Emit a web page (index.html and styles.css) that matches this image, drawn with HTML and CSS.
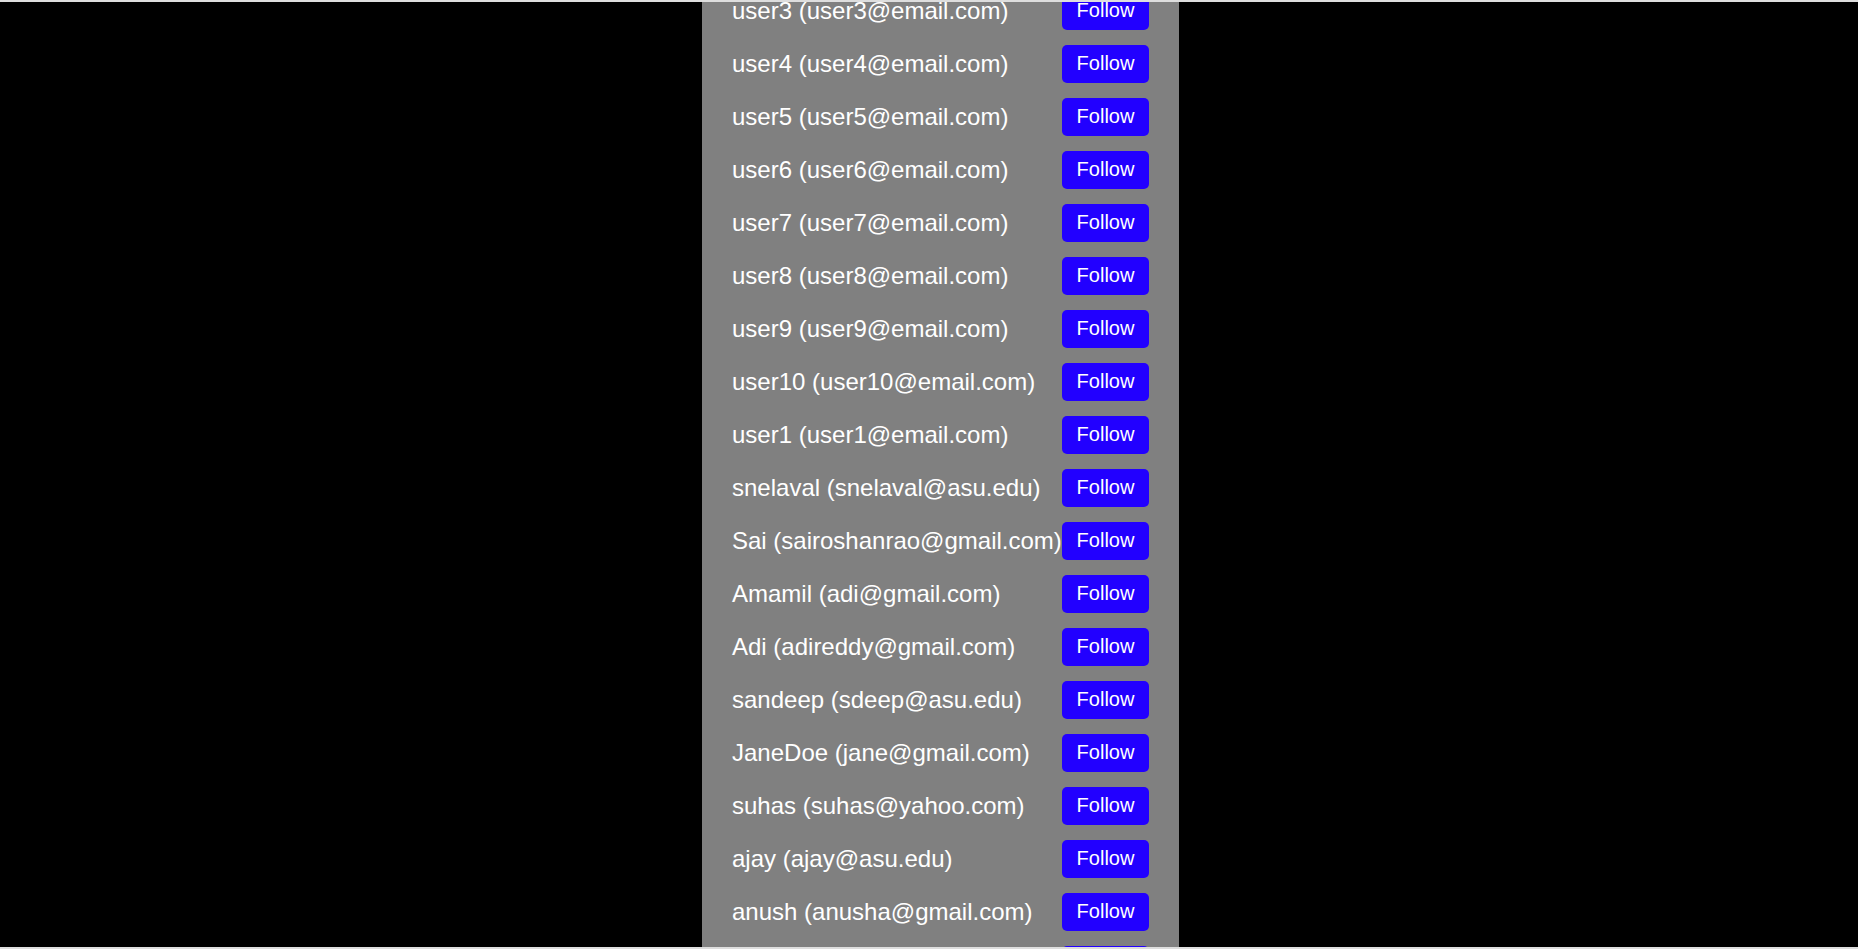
FILE: index.html
```html
<!DOCTYPE html>
<html lang="en">
<head>
<meta charset="utf-8">
<title>Users</title>
<link rel="stylesheet" href="styles.css">
</head>
<body>
<div class="frame">
  <div class="panel">
    <ul class="user-list">
      <li class="user-row"><span class="user-name">user3 (user3@email.com)</span><button class="follow-btn">Follow</button></li>
      <li class="user-row"><span class="user-name">user4 (user4@email.com)</span><button class="follow-btn">Follow</button></li>
      <li class="user-row"><span class="user-name">user5 (user5@email.com)</span><button class="follow-btn">Follow</button></li>
      <li class="user-row"><span class="user-name">user6 (user6@email.com)</span><button class="follow-btn">Follow</button></li>
      <li class="user-row"><span class="user-name">user7 (user7@email.com)</span><button class="follow-btn">Follow</button></li>
      <li class="user-row"><span class="user-name">user8 (user8@email.com)</span><button class="follow-btn">Follow</button></li>
      <li class="user-row"><span class="user-name">user9 (user9@email.com)</span><button class="follow-btn">Follow</button></li>
      <li class="user-row"><span class="user-name">user10 (user10@email.com)</span><button class="follow-btn">Follow</button></li>
      <li class="user-row"><span class="user-name">user1 (user1@email.com)</span><button class="follow-btn">Follow</button></li>
      <li class="user-row"><span class="user-name">snelaval (snelaval@asu.edu)</span><button class="follow-btn">Follow</button></li>
      <li class="user-row"><span class="user-name">Sai (sairoshanrao@gmail.com)</span><button class="follow-btn">Follow</button></li>
      <li class="user-row"><span class="user-name">Amamil (adi@gmail.com)</span><button class="follow-btn">Follow</button></li>
      <li class="user-row"><span class="user-name">Adi (adireddy@gmail.com)</span><button class="follow-btn">Follow</button></li>
      <li class="user-row"><span class="user-name">sandeep (sdeep@asu.edu)</span><button class="follow-btn">Follow</button></li>
      <li class="user-row"><span class="user-name">JaneDoe (jane@gmail.com)</span><button class="follow-btn">Follow</button></li>
      <li class="user-row"><span class="user-name">suhas (suhas@yahoo.com)</span><button class="follow-btn">Follow</button></li>
      <li class="user-row"><span class="user-name">ajay (ajay@asu.edu)</span><button class="follow-btn">Follow</button></li>
      <li class="user-row"><span class="user-name">anush (anusha@gmail.com)</span><button class="follow-btn">Follow</button></li>
      <li class="user-row"><span class="user-name"></span><button class="follow-btn">Follow</button></li>
    </ul>
  </div>
</div>
</body>
</html>
```
FILE: styles.css
```css
html, body {
  margin: 0;
  padding: 0;
  background: #000;
  overflow: hidden;
}

.frame {
  height: 945px;
  border-top: 2px solid #dedede;
  border-bottom: 2px solid #dedede;
  overflow: hidden;
  background: #000;
}

.panel {
  display: flow-root;
  margin-left: 702px;
  width: 477px;
  height: 100%;
  box-sizing: border-box;
  padding: 0 30px;
  background: #808080;
}

.user-list {
  list-style: none;
  margin: -10px 0 0 0;
  padding: 0;
}

.user-row {
  display: flex;
  align-items: center;
  justify-content: space-between;
  height: 38px;
  margin-bottom: 15px;
}

.user-name {
  font-family: "Liberation Sans", Arial, sans-serif;
  font-size: 24px;
  color: #fff;
  white-space: nowrap;
}

.follow-btn {
  flex: none;
  width: 87px;
  height: 38px;
  padding: 0 0 2px 0;
  border: none;
  border-radius: 5px;
  background: #2200ff;
  color: #fff;
  font-family: "Liberation Sans", Arial, sans-serif;
  font-size: 20px;
  line-height: 24px;
  cursor: pointer;
}
```
